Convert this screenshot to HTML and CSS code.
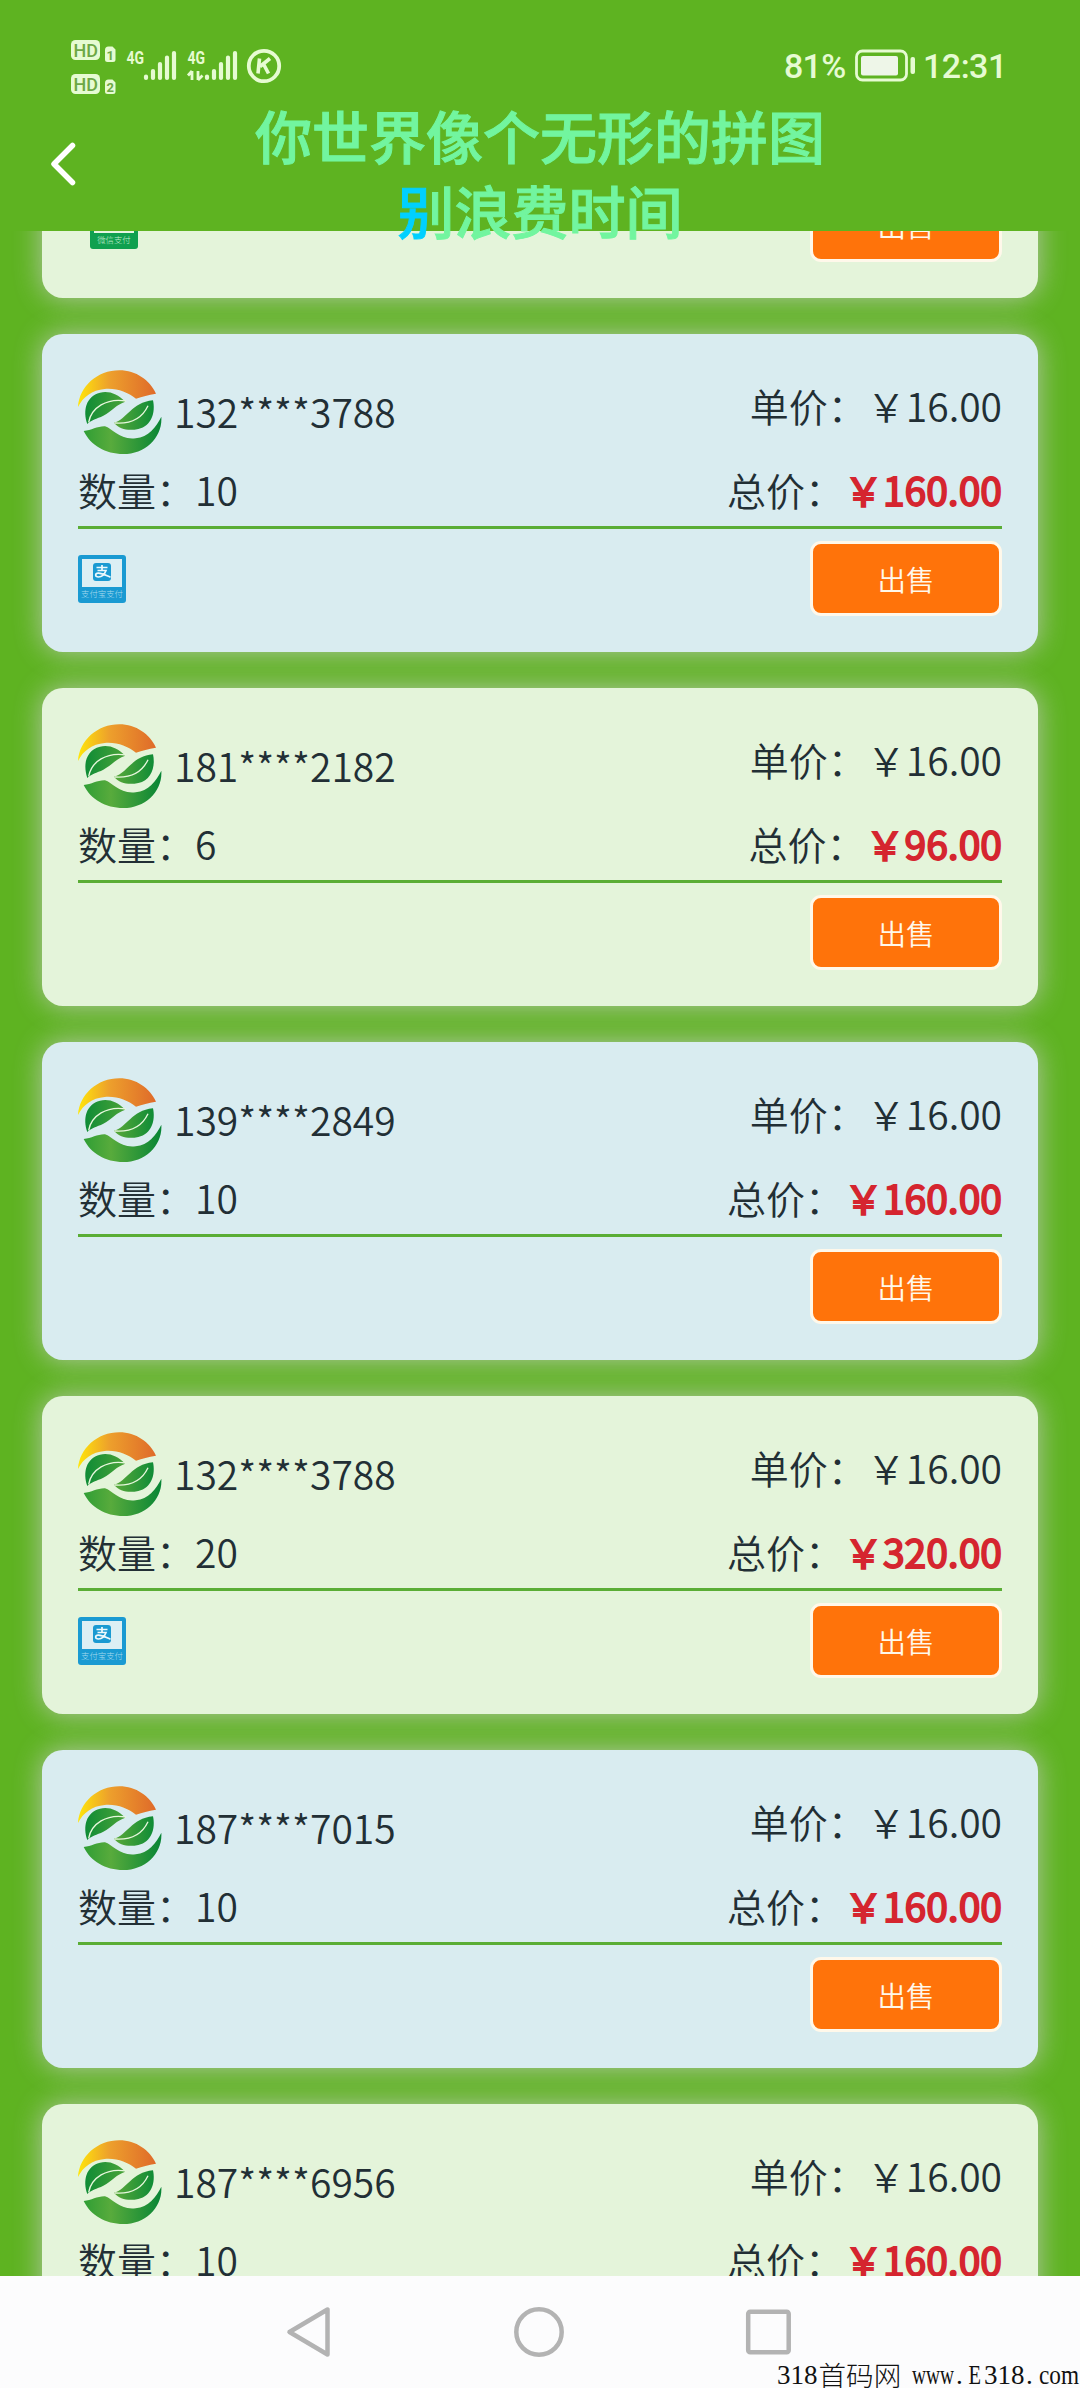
FILE: index.html
```html
<!DOCTYPE html>
<html lang="zh-CN">
<head>
<meta charset="utf-8">
<title>出售</title>
<link rel="stylesheet" href="styles.css">
</head>
<body>
<svg class="defs" width="0" height="0" aria-hidden="true">
  <defs>
    <linearGradient id="sun" x1="0" y1="0" x2="1" y2="0"><stop offset="0" stop-color="#ffe60a"/><stop offset=".4" stop-color="#eda02c"/><stop offset="1" stop-color="#df6a2a"/></linearGradient>
    <linearGradient id="leafA" x1="0" y1="0" x2="1" y2="0"><stop offset="0" stop-color="#0f8c36"/><stop offset="1" stop-color="#4aa338"/></linearGradient>
    <linearGradient id="leafB" x1="0" y1="0" x2="1" y2="0"><stop offset="0" stop-color="#5aa83a"/><stop offset="1" stop-color="#0f8c36"/></linearGradient>
    <linearGradient id="ground" x1="0" y1="0" x2="1" y2="0"><stop offset="0" stop-color="#2f9e35"/><stop offset=".35" stop-color="#58ab3c"/><stop offset="1" stop-color="#088535"/></linearGradient>
    <symbol id="logo" viewBox="24 29 252 252">
      <path fill="url(#sun)" d="M24 140C28 78 82 30 148 30c50 0 92 30 110 70-24 3-40 9-60 15-26-19-56-32-94-29-38 3-65 24-80 54z"/>
      <path fill="url(#leafA)" d="M52 191C38 150 48 108 90 97c28-6 52 4 76 27-26 8-40 28-66 42-20 10-36 12-48 25z"/>
      <path fill="url(#leafB)" d="M132 187c38-8 52-61 117-67 8 36-4 78-44 86-28 6-56 2-73-19z"/>
      <path fill="url(#ground)" d="M41 212c24-2 42-15 64-14 22 6 44 42 92 36 38-4 62-34 77-65 4 62-48 112-114 112-54 0-98-26-119-69z"/>
      <path fill="none" stroke="#e7f7dc" stroke-width="4" d="M56 186c8-44 54-74 112-64M134 188c52 4 84-18 100-52"/>
    </symbol>
    <symbol id="alipay" viewBox="0 0 48 48">
      <rect width="48" height="48" rx="3" fill="#1a9ad2"/>
      <rect x="4" y="4" width="40" height="28" fill="#dceff4"/>
      <rect x="15" y="8" width="18" height="18" rx="3" fill="#1a9ad2"/>
      <path d="M18.500 12.500h11M24 10v5.500M19.500 15.500h8.500c-1.500 4-4.500 6.500-7.500 6.500-4 0-3.500-4 0-3.800 4 .2 7 2 12 4" fill="none" stroke="#eef9fc" stroke-width="1.700"/>
      <text x="24" y="41.500" class="pay-text" fill="#a9dcef">支付宝支付</text>
    </symbol>
    <symbol id="wechat" viewBox="0 0 48 48">
      <rect width="48" height="48" rx="3" fill="#10a04f"/>
      <rect x="4" y="4" width="40" height="28" fill="#e8f5e2"/>
      <text x="24" y="41.500" class="pay-text" fill="#c5ecd2">微信支付</text>
    </symbol>
  </defs>
</svg>

<div class="screen">
  <header class="header">
    <div class="status">
      <svg class="signals" width="214" height="60" viewBox="70 36 214 60" fill="#e6fbd2">
        <rect x="71" y="40" width="29" height="20" rx="4.500"/>
        <rect x="71" y="74" width="29" height="20" rx="4.500"/>
        <path d="M105 50q0-3.500 3.500-3.500h4l3 3v10q0 2.500-2.500 2.500h-5.500q-2.500 0-2.500-2.500zM105 83q0-3.500 3.500-3.500h4l3 3v9q0 2.500-2.500 2.500h-5.500q-2.500 0-2.500-2.500z"/>
        <g class="badge" fill="#6da845">
          <text x="73.500" y="56.500" font-size="18" textLength="24.500" lengthAdjust="spacingAndGlyphs">HD</text>
          <text x="73.500" y="90.500" font-size="18" textLength="24.500" lengthAdjust="spacingAndGlyphs">HD</text>
          <text x="106.500" y="59.500" font-size="13" class="strong">1</text>
          <text x="106.500" y="91.500" font-size="13" class="strong">2</text>
        </g>
        <g class="badge strong">
          <text x="126.500" y="63.500" font-size="19" textLength="17.500" lengthAdjust="spacingAndGlyphs">4G</text>
          <text x="187.500" y="63.500" font-size="19" textLength="17.500" lengthAdjust="spacingAndGlyphs">4G</text>
        </g>
        <g fill="none" stroke="#e6fbd2" stroke-width="4.200" stroke-linecap="round">
          <path d="M146 76.500v1.500M153 71v7M160 64v14M167 57.500v20.500M174 53v25"/>
          <path d="M207 76.500v1.500M214 71v7M221 64v14M228 57.500v20.500M235 53v25"/>
        </g>
        <path d="M192 71v9M188 75.500l4-4.500M198 71v9M198 80l4.500-4.500" fill="none" stroke="#e6fbd2" stroke-width="2.800"/>
        <circle cx="264" cy="66" r="15.200" fill="none" stroke="#e6fbd2" stroke-width="3.800"/>
        <path d="M259.500 58.500l-1.500 15M270 58.500l-10 8M263.500 64l5 9.500" fill="none" stroke="#e6fbd2" stroke-width="3.600"/>
      </svg>
      <div class="power">
        <span class="percent">81%</span>
        <svg width="62" height="34" viewBox="854 48 62 34">
          <rect x="856.500" y="51" width="50" height="29" rx="6" fill="none" stroke="#e6fbd2" stroke-width="2.800"/>
          <rect x="861" y="56" width="37" height="19.500" rx="2" fill="#eef6e8"/>
          <rect x="910.500" y="57" width="4.500" height="17" rx="2" fill="#e6fbd2"/>
        </svg>
        <span class="clock">12:31</span>
      </div>
    </div>
    <div class="navline">
      <svg class="back" width="30" height="48" viewBox="48 140 30 48"><path d="M72.500 145.500L54 164l18.500 18.500" fill="none" stroke="#fff" stroke-width="5.500" stroke-linecap="round" stroke-linejoin="round"/></svg>
    </div>
    <div class="lyrics">
      <div>你世界像个无形的拼图</div>
      <div><span class="sung">别</span>浪费时间</div>
    </div>
  </header>

  <main class="list">
    <section class="card green">
      <div class="top"><svg class="logo"><use href="#logo"/></svg><span class="user">132****3788</span><span class="price">单价：￥16.00</span></div>
      <div class="sum"><span>数量：10</span><span>总价：<b>￥160.00</b></span></div>
      <div class="foot"><svg class="pay second"><use href="#wechat"/></svg><button class="sell">出售</button></div>
    </section>
    <section class="card blue">
      <div class="top"><svg class="logo"><use href="#logo"/></svg><span class="user">132****3788</span><span class="price">单价：￥16.00</span></div>
      <div class="sum"><span>数量：10</span><span>总价：<b>￥160.00</b></span></div>
      <div class="foot"><svg class="pay"><use href="#alipay"/></svg><button class="sell">出售</button></div>
    </section>
    <section class="card green">
      <div class="top"><svg class="logo"><use href="#logo"/></svg><span class="user">181****2182</span><span class="price">单价：￥16.00</span></div>
      <div class="sum"><span>数量：6</span><span>总价：<b>￥96.00</b></span></div>
      <div class="foot"><button class="sell">出售</button></div>
    </section>
    <section class="card blue">
      <div class="top"><svg class="logo"><use href="#logo"/></svg><span class="user">139****2849</span><span class="price">单价：￥16.00</span></div>
      <div class="sum"><span>数量：10</span><span>总价：<b>￥160.00</b></span></div>
      <div class="foot"><button class="sell">出售</button></div>
    </section>
    <section class="card green">
      <div class="top"><svg class="logo"><use href="#logo"/></svg><span class="user">132****3788</span><span class="price">单价：￥16.00</span></div>
      <div class="sum"><span>数量：20</span><span>总价：<b>￥320.00</b></span></div>
      <div class="foot"><svg class="pay"><use href="#alipay"/></svg><button class="sell">出售</button></div>
    </section>
    <section class="card blue">
      <div class="top"><svg class="logo"><use href="#logo"/></svg><span class="user">187****7015</span><span class="price">单价：￥16.00</span></div>
      <div class="sum"><span>数量：10</span><span>总价：<b>￥160.00</b></span></div>
      <div class="foot"><button class="sell">出售</button></div>
    </section>
    <section class="card green">
      <div class="top"><svg class="logo"><use href="#logo"/></svg><span class="user">187****6956</span><span class="price">单价：￥16.00</span></div>
      <div class="sum"><span>数量：10</span><span>总价：<b>￥160.00</b></span></div>
      <div class="foot"><button class="sell">出售</button></div>
    </section>
  </main>

  <footer class="navbar">
    <svg width="48" height="54" viewBox="284 2305 48 54"><path d="M327.500 2309.500v45L289.500 2332z" fill="none" stroke="#b3b3b3" stroke-width="4.500" stroke-linejoin="round"/></svg>
    <svg width="54" height="54" viewBox="0 0 54 54"><circle cx="27" cy="27" r="22.700" fill="none" stroke="#b3b3b3" stroke-width="4.500"/></svg>
    <svg width="48" height="54" viewBox="0 0 48 54"><rect x="3.200" y="6.700" width="40.500" height="40.500" rx="2" fill="none" stroke="#b3b3b3" stroke-width="4.500"/></svg>
    <svg class="watermark" width="306" height="30" viewBox="774 2358 306 30" fill="#111">
      <text x="777" y="2384" textLength="40.500" lengthAdjust="spacingAndGlyphs">318</text>
      <text x="818.500" y="2385.500" class="cjk">首码网</text>
      <text x="912" y="2384" textLength="42" lengthAdjust="spacingAndGlyphs">www</text>
      <text x="956" y="2384">.</text>
      <text x="968.500" y="2384" textLength="12.500" lengthAdjust="spacingAndGlyphs">E</text>
      <text x="984" y="2384" textLength="40.500" lengthAdjust="spacingAndGlyphs">318</text>
      <text x="1026" y="2384">.</text>
      <text x="1039" y="2384" textLength="40" lengthAdjust="spacingAndGlyphs">com</text>
    </svg>
  </footer>
</div>
</body>
</html>
```
FILE: styles.css
```css
* { box-sizing: border-box; }

body {
  margin: 0;
  background: #5eb321;
  color: #222f35;
  font-family: "Noto Sans CJK SC", sans-serif;
  font-size: 39px;
  font-weight: 350;
}

svg { display: block; flex: none; }

.defs { position: absolute; }

.screen {
  display: flex;
  flex-direction: column;
  width: 1080px;
  height: 2388px;
  overflow: hidden;
}

.header {
  position: relative;
  flex: none;
  height: 231px;
  background: #5eb321;
}

.status {
  display: flex;
  justify-content: space-between;
  align-items: flex-start;
  padding: 36px 73px 0 70px;
  height: 140px;
}

.badge { font-family: Roboto, sans-serif; font-weight: 500; }
.badge .strong, .badge.strong { font-weight: 700; }

.power {
  display: flex;
  align-items: center;
  padding-top: 12px;
  height: 46px;
  font: 500 34px/34px Roboto, sans-serif;
  color: #e6fbd2;
}

.percent { width: 70px; padding-top: 2px; letter-spacing: -0.7px; }
.clock { width: 84px; margin-left: 7px; padding-top: 2px; letter-spacing: -0.5px; }

.navline { padding-left: 48px; }

.lyrics {
  position: absolute;
  z-index: 2;
  top: 97px;
  left: 0;
  width: 100%;
  text-align: center;
  font-size: 57px;
  font-weight: 500;
  line-height: 75px;
  color: #72f59f;
  -webkit-text-stroke: 1px #72f59f;
}

.sung {
  background: linear-gradient(90deg, #00d0ff 57%, #72f59f 57%);
  -webkit-background-clip: text;
  background-clip: text;
  color: transparent;
  -webkit-text-stroke: 1px transparent;
}

.list {
  flex: none;
  display: flex;
  flex-direction: column;
  justify-content: flex-end;
  gap: 36px;
  height: 2045px;
  padding: 0 42px;
  overflow: hidden;
}

/* the list is scrolled: the last card runs on below the navigation bar */
.card:last-child { margin-bottom: -146px; }

.card {
  flex: none;
  height: 318px;
  padding: 36px;
  border-radius: 21px;
  box-shadow: 0 0 28px rgba(205, 205, 205, 0.78);
}

.green { background: #e4f4da; }
.blue { background: #d9ecf0; }

.top { display: flex; height: 84px; }
.logo { width: 84px; height: 84px; }
.user { margin-left: 12px; line-height: 82px; }
.price { margin-left: auto; line-height: 70px; }

.sum {
  display: flex;
  justify-content: space-between;
  height: 75px;
  border-bottom: 3px solid #5aad35;
  line-height: 70px;
}

.sum b {
  font-weight: 400;
  color: #d5252f;
  -webkit-text-stroke: 1.8px #d5252f;
}

.foot { display: flex; align-items: flex-start; padding-top: 12px; }

.pay { width: 48px; height: 48px; margin-top: 14px; }
.second { margin-left: 12px; }
.pay-text { font-size: 8.400px; text-anchor: middle; font-weight: 300; }

.sell {
  width: 192px;
  height: 75px;
  margin-left: auto;
  padding: 0;
  border: 3px solid #fff8ea;
  border-radius: 11px;
  background: #ff730a;
  color: #fff8ea;
  font: 350 28.500px/66px "Noto Sans CJK SC", sans-serif;
}

.navbar {
  position: relative;
  flex: none;
  display: flex;
  justify-content: space-between;
  height: 112px;
  padding: 29px 287px 0 284px;
  background: #fcfcfd;
}

.watermark {
  position: absolute;
  right: 0;
  bottom: 0;
  font-family: "Liberation Serif", serif;
  font-size: 27px;
}

.cjk {
  font-family: "Noto Sans CJK SC", sans-serif;
  font-weight: 300;
  font-size: 27.600px;
}
```
